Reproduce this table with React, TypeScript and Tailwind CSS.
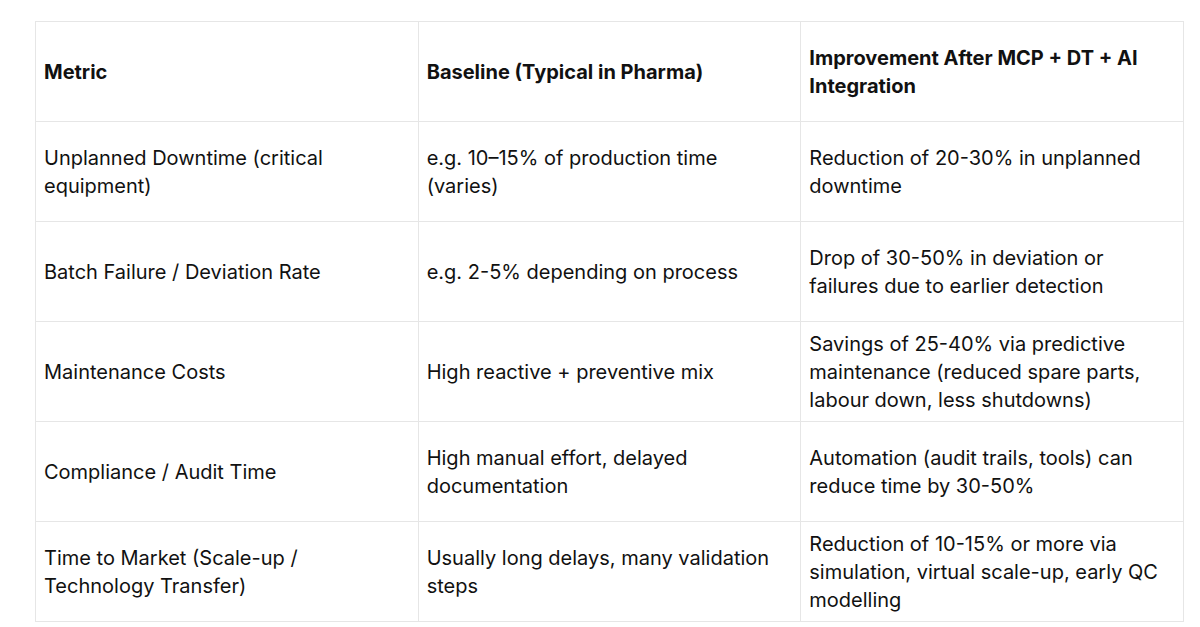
const headers: string[][] = [
  ['Metric'],
  ['Baseline (Typical in Pharma)'],
  ['Improvement After MCP + DT + AI', 'Integration'],
];

const rows: string[][][] = [
  [
    ['Unplanned Downtime (critical', 'equipment)'],
    ['e.g. 10–15% of production time', '(varies)'],
    ['Reduction of 20-30% in unplanned', 'downtime'],
  ],
  [
    ['Batch Failure / Deviation Rate'],
    ['e.g. 2-5% depending on process'],
    ['Drop of 30-50% in deviation or', 'failures due to earlier detection'],
  ],
  [
    ['Maintenance Costs'],
    ['High reactive + preventive mix'],
    [
      'Savings of 25-40% via predictive',
      'maintenance (reduced spare parts,',
      'labour down, less shutdowns)',
    ],
  ],
  [
    ['Compliance / Audit Time'],
    ['High manual effort, delayed', 'documentation'],
    ['Automation (audit trails, tools) can', 'reduce time by 30-50%'],
  ],
  [
    ['Time to Market (Scale-up /', 'Technology Transfer)'],
    ['Usually long delays, many validation', 'steps'],
    [
      'Reduction of 10-15% or more via',
      'simulation, virtual scale-up, early QC',
      'modelling',
    ],
  ],
];

function Lines({ lines }: { lines: string[] }) {
  return (
    <>
      {lines.map((l) => (
        <div key={l} className="whitespace-nowrap">
          {l}
        </div>
      ))}
    </>
  );
}

export default function App() {
  return (
    <div className="w-[1200px] h-[627px] bg-white pl-[35px] pt-[21px] font-['Inter',sans-serif] text-[#111]">
      <table className="w-[1149px] table-fixed border-collapse">
        <thead>
          <tr className="h-[100px]">
            {headers.map((h, i) => (
              <th
                key={i}
                className="border border-[#e6e6e6] px-[8px] text-left align-middle text-[20px] leading-[28px] font-bold"
              >
                <Lines lines={h} />
              </th>
            ))}
          </tr>
        </thead>
        <tbody>
          {rows.map((r, i) => (
            <tr key={i} className="h-[100px]">
              {r.map((c, j) => (
                <td
                  key={j}
                  className="border border-[#e6e6e6] px-[8px] align-middle text-[20px] leading-[28px]"
                >
                  <Lines lines={c} />
                </td>
              ))}
            </tr>
          ))}
        </tbody>
      </table>
    </div>
  );
}
